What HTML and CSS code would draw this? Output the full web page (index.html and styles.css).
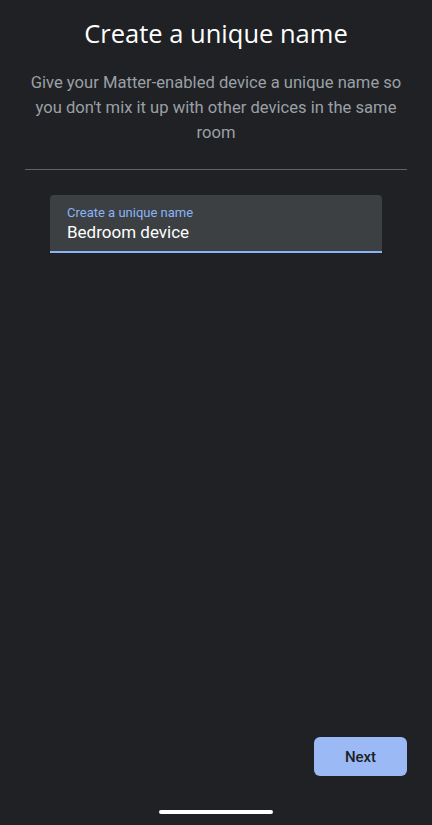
FILE: index.html
```html
<!DOCTYPE html>
<html>
<head>
<meta charset="utf-8">
<link rel="stylesheet" href="styles.css">
</head>
<body>
<div class="screen">
  <h1 class="title">Create a unique name</h1>
  <p class="subtitle">Give your Matter-enabled device a unique name so you don't mix it up with other devices in the same room</p>
  <div class="divider"></div>
  <div class="field">
    <div class="field-label">Create a unique name</div>
    <div class="field-value">Bedroom device</div>
  </div>
  <div class="spacer"></div>
  <div class="actions">
    <button class="next">Next</button>
  </div>
  <div class="home-bar"><div class="home-indicator"></div></div>
</div>
</body>
</html>
```

FILE: styles.css
```css
html, body {
  margin: 0;
  padding: 0;
  background: #202124;
}
.screen {
  width: 432px;
  height: 825px;
  display: flex;
  flex-direction: column;
  font-family: Roboto, "Noto Sans", sans-serif;
}
.title {
  margin: 16px 0 0;
  text-align: center;
  color: #ffffff;
  font-family: "Open Sans", Roboto, sans-serif;
  font-weight: 400;
  font-size: 25.5px;
  line-height: 34px;
}
.subtitle {
  margin: 20px 24px 0;
  text-align: center;
  color: #9aa0a6;
  font-size: 16.6px;
  line-height: 25px;
}
.divider {
  margin: 24px 25px 0;
  height: 1px;
  background: #5f6368;
}
.field {
  margin: 25px 50px 0;
  background: #3c4043;
  border-radius: 4px 4px 0 0;
  border-bottom: 2px solid #8ab4f8;
  padding: 10px 17px 8px;
}
.field-label {
  color: #8ab4f8;
  font-size: 13px;
  line-height: 16px;
}
.field-value {
  color: #ffffff;
  font-size: 17px;
  line-height: 22px;
}
.spacer {
  flex: 1;
}
.actions {
  display: flex;
  justify-content: flex-end;
  padding: 0 25px 0 0;
}
.next {
  width: 93px;
  height: 39px;
  border: none;
  border-radius: 6px;
  background: #9ab9f5;
  color: #202124;
  font-family: Roboto, sans-serif;
  font-size: 15px;
  font-weight: 500;
}
.home-bar {
  display: flex;
  justify-content: center;
  padding: 34px 0 11px;
}
.home-indicator {
  width: 114px;
  height: 4px;
  border-radius: 2px;
  background: #ffffff;
}
```
